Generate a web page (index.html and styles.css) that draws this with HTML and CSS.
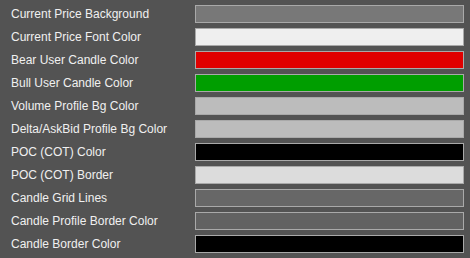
FILE: index.html
```html
<!DOCTYPE html>
<html>
<head>
<meta charset="utf-8">
<link rel="stylesheet" href="styles.css">
</head>
<body>
<div class="painelCores">
    <div class="linhaCor">
        <div class="nomeCor">Current Price Background</div>
        <div class="amostraCor" style="background-color: #787878"></div>
    </div>
    <div class="linhaCor">
        <div class="nomeCor">Current Price Font Color</div>
        <div class="amostraCor" style="background-color: #efefef"></div>
    </div>
    <div class="linhaCor">
        <div class="nomeCor">Bear User Candle Color</div>
        <div class="amostraCor" style="background-color: #e00000"></div>
    </div>
    <div class="linhaCor">
        <div class="nomeCor">Bull User Candle Color</div>
        <div class="amostraCor" style="background-color: #009e00"></div>
    </div>
    <div class="linhaCor">
        <div class="nomeCor">Volume Profile Bg Color</div>
        <div class="amostraCor" style="background-color: #bcbcbc"></div>
    </div>
    <div class="linhaCor">
        <div class="nomeCor">Delta/AskBid Profile Bg Color</div>
        <div class="amostraCor" style="background-color: #bcbcbc"></div>
    </div>
    <div class="linhaCor">
        <div class="nomeCor">POC (COT) Color</div>
        <div class="amostraCor" style="background-color: #000000"></div>
    </div>
    <div class="linhaCor">
        <div class="nomeCor">POC (COT) Border</div>
        <div class="amostraCor" style="background-color: #dcdcdc"></div>
    </div>
    <div class="linhaCor">
        <div class="nomeCor">Candle Grid Lines</div>
        <div class="amostraCor" style="background-color: #676767"></div>
    </div>
    <div class="linhaCor">
        <div class="nomeCor">Candle Profile Border Color</div>
        <div class="amostraCor" style="background-color: #626262"></div>
    </div>
    <div class="linhaCor">
        <div class="nomeCor">Candle Border Color</div>
        <div class="amostraCor" style="background-color: #000000"></div>
    </div>
</div>
</body>
</html>
```

FILE: styles.css
```css
body{
    margin: 0;
    background-color: #535353;
    font-family: "Liberation Sans", Arial, sans-serif;
    font-size: 12px;
    color: #f0f0f0;
}

.painelCores{
    padding: 5px 6px 0 11px;
}

.linhaCor{
    display: flex;
    align-items: center;
    height: 18px;
    margin-bottom: 5px;
}

.nomeCor{
    flex: 1;
    white-space: nowrap;
}

.amostraCor{
    width: 269px;
    height: 18px;
    box-sizing: border-box;
    border: 1px solid #a9a9a9;
}
```
